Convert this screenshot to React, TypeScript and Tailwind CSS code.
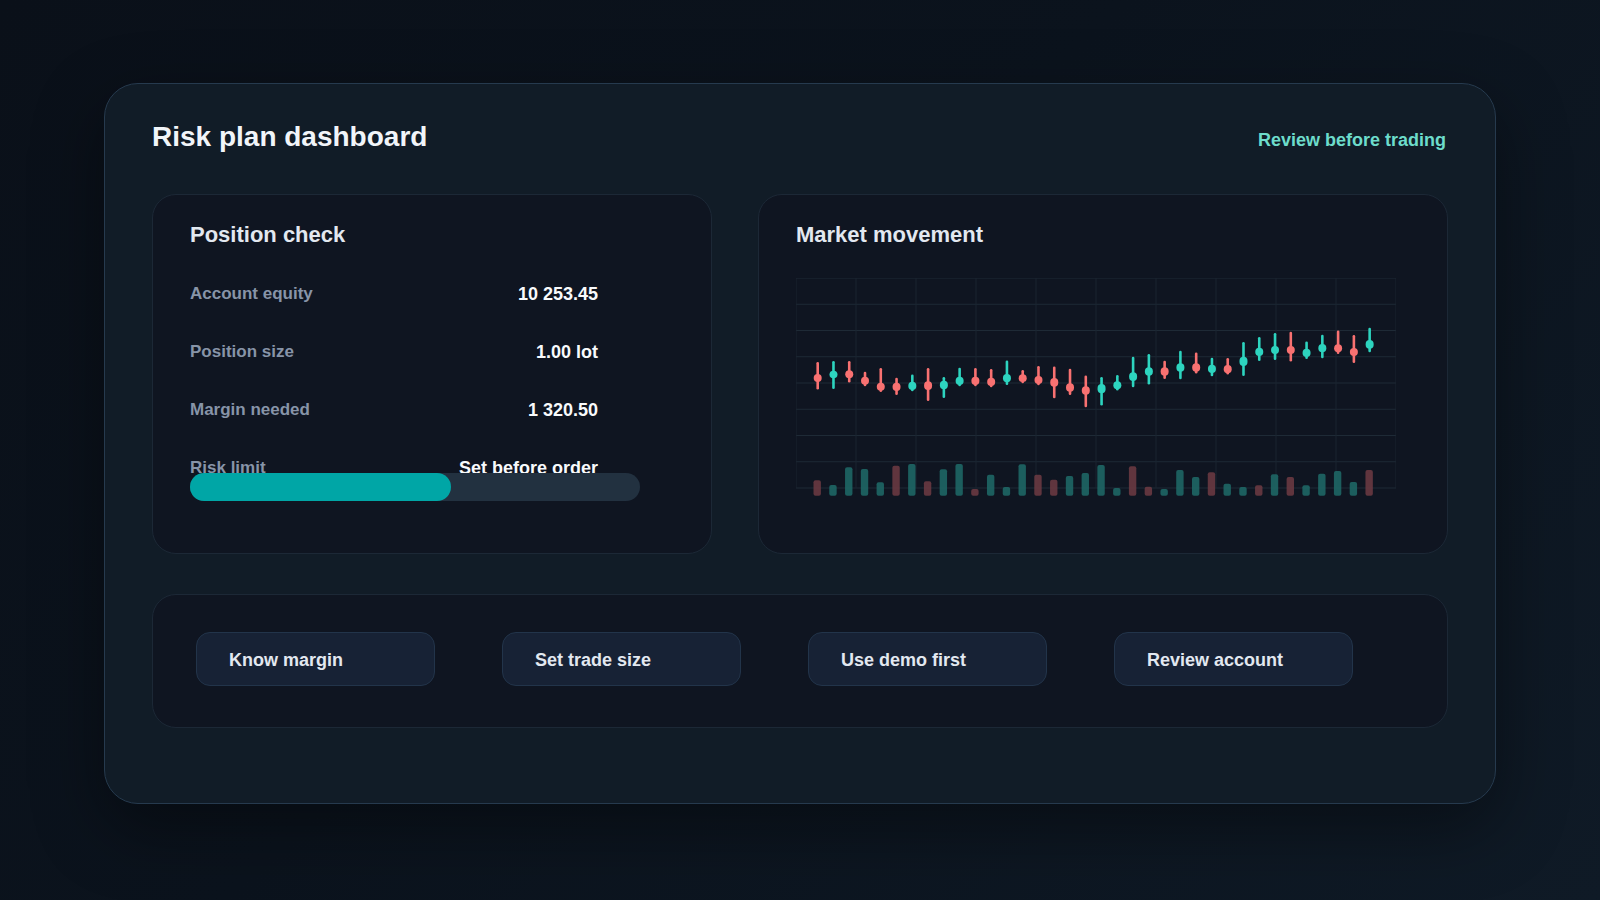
import React from "react";

// [wickTop, wickBottom, bodyTop, bodyBottom, up]
const candles: [number, number, number, number, boolean][] = [
	[85.3, 110.3, 96, 104, false],
	[84.3, 109.7, 92.7, 100.3, true],
	[84.3, 103.3, 92.3, 100.3, false],
	[95, 107, 98.7, 106.7, false],
	[91.3, 112.7, 104.7, 112.7, false],
	[101, 115.7, 104.7, 113, false],
	[97.7, 112, 103.7, 112, true],
	[91.3, 121.7, 103.3, 112, false],
	[100.3, 118.7, 102.7, 111.3, true],
	[91, 107, 98.7, 107, true],
	[91.3, 107, 98.7, 107, false],
	[92.3, 108, 99.7, 108, false],
	[83.7, 105.7, 96, 104.3, true],
	[93.3, 104, 96.3, 104, false],
	[89.3, 106, 98, 106, false],
	[89.7, 119, 100, 108.7, false],
	[92, 115.7, 105.3, 113.7, false],
	[98.7, 128, 108.3, 116.7, false],
	[100.3, 126.3, 106, 115.3, true],
	[98.3, 111.3, 103.3, 111.3, true],
	[80, 108, 94.3, 103, true],
	[77.3, 105.3, 89.3, 97.7, true],
	[84, 99.7, 89.3, 97.7, false],
	[74, 100, 85.3, 93.7, true],
	[75.7, 94.3, 85.3, 93.7, false],
	[81, 97, 86.7, 95, true],
	[81.3, 95.3, 87, 95.3, false],
	[65.3, 96.7, 78.7, 88, true],
	[60.3, 81.7, 69.7, 78, true],
	[56.3, 80.7, 68, 76, true],
	[55, 82.3, 68, 76, false],
	[64.7, 79.7, 70.7, 79, true],
	[58, 79, 66, 74.3, true],
	[53.7, 74.7, 66.3, 74.3, false],
	[58.3, 83.7, 70, 78, false],
	[51, 73, 62, 70.7, true],
];

// [top, up]
const volumes: [number, boolean][] = [
	[202.3, false], [207, true], [189.3, true], [191, true], [204.3, true], [187.7, false],
	[186, true], [203.3, false], [191.3, true], [186, true], [211, false], [196.7, true],
	[209, true], [186.3, true], [196.7, false], [201.7, false], [198, true], [195, true],
	[187, true], [210, true], [188.3, false], [208.7, false], [211, true], [192, true],
	[199, true], [194.3, false], [205.7, true], [209, true], [207.3, false], [196.3, true],
	[199, false], [207.3, true], [195.7, true], [193, true], [204, true], [192, false],
];

const rows = [
	{ label: "Account equity", value: "10 253.45" },
	{ label: "Position size", value: "1.00 lot" },
	{ label: "Margin needed", value: "1 320.50" },
	{ label: "Risk limit", value: "Set before order" },
];

const actions = ["Know margin", "Set trade size", "Use demo first", "Review account"];

function MarketChart() {
	const up = "#2dd4bf";
	const down = "#f87171";
	return (
		<svg width="600" height="220" viewBox="0 0 600 220" className="block">
			{[0, 1, 2, 3, 4, 5, 6, 7, 8].map((i) => (
				<line key={"h" + i} x1="0" x2="600" y1={i * 26.25} y2={i * 26.25} stroke="#1e2a36" strokeWidth="1" />
			))}
			{[0, 1, 2, 3, 4, 5, 6, 7, 8, 9, 10].map((i) => (
				<line key={"v" + i} x1={i * 60} x2={i * 60} y1="0" y2="210" stroke="#1a2431" strokeWidth="1" />
			))}
			{volumes.map(([top, isUp], i) => {
				const cx = 21.7 + i * 15.77;
				return (
					<rect
						key={"vol" + i}
						x={cx - 4.2}
						y={top}
						width="7.4"
						height={217.7 - top}
						rx="2"
						fill={isUp ? "#1f6b69" : "#6e3b43"}
						opacity="0.85"
					/>
				);
			})}
			{candles.map(([wt, wb, bt, bb, isUp], i) => {
				const cx = 21.7 + i * 15.77;
				const c = isUp ? up : down;
				return (
					<g key={"c" + i}>
						<line x1={cx} x2={cx} y1={wt} y2={wb} stroke={c} strokeWidth="2.6" strokeLinecap="round" />
						<rect x={cx - 4} y={bt} width="8" height={bb - bt} rx="4" fill={c} />
					</g>
				);
			})}
		</svg>
	);
}

export default function App() {
	return (
		<div
			className="min-h-[900px] w-full bg-[linear-gradient(135deg,#0a1019_0%,#0b131d_45%,#0f1a26_100%)] pt-[83px]"
			style={{ fontFamily: '"Liberation Sans", Arial, sans-serif' }}
		>
			<div className="mx-auto w-[1392px] h-[721px] rounded-[34px] border border-[#263a4e] bg-[#111c27] px-[47px] pt-[36px] shadow-[0_24px_70px_rgba(0,0,0,0.4)]">
				<div className="flex items-end justify-between h-[34px]">
					<h1 className="text-[28px] leading-[34px] font-bold text-[#f1f5f9]">Risk plan dashboard</h1>
					<span className="text-[18px] leading-[28px] font-bold text-[#6ddccb] pr-[2px]">
						Review before trading
					</span>
				</div>

				<div className="mt-[40px] grid grid-cols-[560px_1fr] gap-[46px]">
					<div className="h-[360px] rounded-[24px] border border-[#1c2836] bg-[#0f1521] px-[37px] pt-[26px]">
						<h2 className="text-[22px] leading-[28px] font-bold text-[#e2e8f0]">Position check</h2>
						<div className="mt-[33px] flex flex-col gap-[34px] w-[408px]">
							{rows.map((r) => (
								<div key={r.label} className="flex h-[24px] items-center justify-between">
									<span className="text-[17px] leading-[24px] font-bold text-[#8794a8]">{r.label}</span>
									<span className="text-[18px] leading-[24px] font-bold text-[#f8fafc]">{r.value}</span>
								</div>
							))}
						</div>
						<div className="relative mt-[-7px] h-[28px] w-[450px] rounded-full bg-[#223140]">
							<div className="h-full w-[58%] rounded-full bg-[#00a6a6]" />
						</div>
					</div>

					<div className="h-[360px] rounded-[24px] border border-[#1c2836] bg-[#0f1521] px-[37px] pt-[26px]">
						<h2 className="text-[22px] leading-[28px] font-bold text-[#e2e8f0]">Market movement</h2>
						<div className="mt-[29px]">
							<MarketChart />
						</div>
					</div>
				</div>

				<div className="mt-[40px] h-[134px] rounded-[24px] border border-[#1c2836] bg-[#0f1521] pl-[43px] pt-[37px]">
					<div className="flex gap-[67px]">
						{actions.map((a) => (
							<button
								key={a}
								type="button"
								className="h-[54px] w-[239px] rounded-[14px] border border-[#22344a] bg-[#172235] pl-[32px] pt-[3px] text-left text-[18px] font-bold text-[#e2e8f0]"
							>
								{a}
							</button>
						))}
					</div>
				</div>
			</div>
		</div>
	);
}
